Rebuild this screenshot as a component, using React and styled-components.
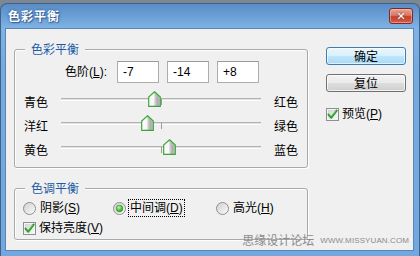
import React, { useId } from 'react';
import styled, { createGlobalStyle } from 'styled-components';

const Global = createGlobalStyle`
  html, body { margin: 0; padding: 0; background: #7c8792; }
  body {
    width: 420px; height: 256px; overflow: hidden;
    font-family: "Liberation Sans", "Noto Sans CJK SC", sans-serif;
    font-size: 12px; color: #000;
  }
`;

const Screen = styled.div`
  position: relative;
  width: 420px;
  height: 256px;
  box-sizing: border-box;
  padding-top: 3px;
  background: #7c8792;
`;

const Window = styled.div`
  height: 100%;
  box-sizing: border-box;
  display: flex;
  flex-direction: column;
  padding: 0 5px 5px 4px;
  border: 1px solid #3f6288;
  border-bottom: none;
  border-radius: 7px 7px 0 0;
  background: linear-gradient(to bottom, #5a8dc7 0px, #6a9fd6 12px, #80b3e5 24px, #76abe0 60px, #72a8df 100%);
`;

const TitleBar = styled.div`
  height: 24px;
  flex: none;
  display: flex;
  align-items: center;
  justify-content: space-between;
  padding: 0 1px 0 3px;
`;

const TitleText = styled.span`
  font-family: "Noto Sans CJK SC", sans-serif;
  font-weight: bold;
  font-size: 12px;
  letter-spacing: 1px;
  line-height: 14px;
  color: #fff;
  text-shadow: 0 0 3px rgba(40, 80, 140, 0.9), 1px 1px 1px rgba(30, 60, 110, 0.6);
`;

const CloseButton = styled.div`
  width: 24px;
  height: 16px;
  box-sizing: border-box;
  border: 1px solid #7c2a22;
  border-radius: 3px;
  background: linear-gradient(to bottom, #e6a597 0%, #d77865 45%, #c4402c 55%, #d0604a 100%);
  box-shadow: inset 0 0 0 1px rgba(255, 200, 190, 0.5);
  display: flex;
  align-items: center;
  justify-content: center;
  color: #fff;
  font-family: "DejaVu Sans", sans-serif;
  font-weight: bold;
  font-size: 11px;
  line-height: 1;
  text-shadow: 0 0 2px #7c2a22;
`;

const Client = styled.div`
  flex: 1;
  display: flex;
  background: #f0f0f0;
  border: 1px solid #5a86b4;
  padding: 0 0 0 8px;
`;

const LeftCol = styled.div`
  display: flex;
  flex-direction: column;
  gap: 20px;
  padding-top: 20px;
`;

const Group = styled.div`
  position: relative;
  width: 294px;
  height: ${p => p.$h}px;
  box-sizing: border-box;
  border: 1px solid #a9a9a9;
  border-radius: 3px;
  box-shadow: inset 1px 1px 0 #fff, 1px 1px 0 #fff;
  padding: ${p => p.$pad};
`;

const Legend = styled.span`
  position: absolute;
  left: 10px;
  top: -8px;
  padding: 0 6px;
  background: #f0f0f0;
  font-family: "Noto Sans CJK SC", sans-serif;
  font-size: 12px;
  line-height: 14px;
  color: #1f5ba6;
`;

const LevelsRow = styled.div`
  display: flex;
  align-items: center;
  gap: 8px;
`;

const LevelsLabel = styled.span`
  width: 92px;
  margin-right: 2px;
  text-align: right;
  line-height: 14px;
`;

const Mn = styled.u`
  text-decoration: underline;
  text-underline-offset: 1px;
`;

const NumBox = styled.div`
  width: 42px;
  height: 22px;
  box-sizing: border-box;
  border: 1px solid #abadb3;
  border-top-color: #9a9ca3;
  background: #fff;
  padding-left: 5px;
  display: flex;
  align-items: center;
  font-size: 12px;
`;

const Sliders = styled.div`
  margin-top: 7px;
  display: flex;
  flex-direction: column;
`;

const SliderRow = styled.div`
  height: 24px;
  display: flex;
  align-items: center;
  padding-left: 9px;
`;

const SideLabel = styled.span`
  width: ${p => p.$w}px;
  font-family: "Noto Sans CJK SC", sans-serif;
  font-size: 12px;
  line-height: 14px;
`;

const Track = styled.div`
  position: relative;
  width: 200px;
  height: 24px;
  margin-right: 13px;
`;

const Groove = styled.div`
  position: absolute;
  left: 0;
  right: 0;
  top: 8px;
  height: 1px;
  background: #e2e2e2;
  border-top: 1px solid #b2b2b2;
  border-bottom: 1px solid #fdfdfd;
`;

const Tick = styled.div`
  position: absolute;
  left: 100px;
  top: 9px;
  width: 1px;
  height: 6px;
  background: #9a9a9a;
`;

const ThumbWrap = styled.div`
  position: absolute;
  top: 1px;
  width: 13px;
  height: 16px;
  line-height: 0;
`;

const RightCol = styled.div`
  display: flex;
  flex-direction: column;
  margin-left: 18px;
  padding-top: 18px;
`;

const Button = styled.div`
  width: 80px;
  height: 18px;
  box-sizing: border-box;
  border-radius: 3px;
  border: 1px solid ${p => (p.$default ? '#3c7fb1' : '#707070')};
  background: ${p =>
    p.$default
      ? 'linear-gradient(to bottom, #eaf6fd 0%, #d9f0fc 48%, #bee6fd 52%, #a7d9f5 100%)'
      : 'linear-gradient(to bottom, #f2f2f2 0%, #ebebeb 48%, #dddddd 52%, #cfcfcf 100%)'};
  box-shadow: inset 0 0 0 1px ${p => (p.$default ? 'rgba(255,255,255,0.6)' : 'rgba(255,255,255,0.7)')};
  display: flex;
  align-items: center;
  justify-content: center;
  font-family: "Noto Sans CJK SC", sans-serif;
  font-size: 12px;
  line-height: 14px;
  margin-bottom: ${p => p.$mb || 0}px;
`;

const CheckRow = styled.label`
  display: flex;
  align-items: center;
  gap: 3px;
  height: 16px;
  margin-top: ${p => p.$mt || 0}px;
  line-height: 14px;
`;

const RadioRow = styled.div`
  display: grid;
  grid-template-columns: 90px 103px auto;
  align-items: center;
  height: 20px;
`;

const Option = styled.div`
  display: flex;
  align-items: center;
  gap: 2px;
  line-height: 14px;
`;

const OptText = styled.span`
  padding: 1px 1px;
  border: 1px dotted ${p => (p.$focus ? '#000' : 'transparent')};
`;

const Watermark = styled.div`
  position: absolute;
  right: 11px;
  bottom: 9px;
  display: flex;
  align-items: center;
  gap: 6px;
  color: #8c8c8c;
  pointer-events: none;
`;

const WmCn = styled.span`
  font-family: "Noto Sans CJK SC", sans-serif;
  font-size: 12px;
  line-height: 14px;
`;

const WmUrl = styled.span`
  font-family: "Liberation Sans", sans-serif;
  font-size: 8px;
  line-height: 10px;
  letter-spacing: 0.1px;
  padding-top: 2px;
`;

function Thumb({ value }) {
  const id = useId().replace(/:/g, '');
  return (
    <ThumbWrap style={{ left: 100 + value - 6 }}>
      <svg width="13" height="16" viewBox="0 0 13 16">
        <defs>
          <linearGradient id={`t${id}`} x1="0" y1="0" x2="1" y2="0">
            <stop offset="0" stopColor="#ffffff" />
            <stop offset="0.45" stopColor="#f6f6f6" />
            <stop offset="0.55" stopColor="#cdcdcd" />
            <stop offset="0.8" stopColor="#a9a9a9" />
            <stop offset="1" stopColor="#d8d8d8" />
          </linearGradient>
        </defs>
        <path d="M6.5 0.8 L12.3 6 L12.3 15.3 L0.7 15.3 L0.7 6 Z" fill={`url(#t${id})`} stroke="#3aa63a" strokeWidth="1.2" />
        <path d="M6.5 2.4 L10.8 6.4" stroke="#8fd88a" strokeWidth="1" fill="none" />
      </svg>
    </ThumbWrap>
  );
}

function CheckBox() {
  const id = useId().replace(/:/g, '');
  return (
    <svg width="13" height="13" viewBox="0 0 13 13" style={{ flex: 'none' }}>
      <defs>
        <linearGradient id={`c${id}`} x1="0" y1="0" x2="1" y2="1">
          <stop offset="0" stopColor="#d4d4d4" />
          <stop offset="1" stopColor="#f8f8f8" />
        </linearGradient>
      </defs>
      <rect x="0.5" y="0.5" width="12" height="12" fill="#f4f4f4" stroke="#8e8f8f" />
      <rect x="2" y="2" width="9" height="9" fill={`url(#c${id})`} />
      <path d="M2.6 6.6 L5.2 9.6 L10.6 2.6" stroke="#2b9b25" strokeWidth="2.2" fill="none" strokeLinecap="round" strokeLinejoin="round" />
      <path d="M3.4 6.4 L5.2 8.4 L9.8 2.9" stroke="#7fd46e" strokeWidth="0.8" fill="none" />
    </svg>
  );
}

function Radio({ checked }) {
  const id = useId().replace(/:/g, '');
  return (
    <svg width="13" height="13" viewBox="0 0 13 13" style={{ flex: 'none' }}>
      <defs>
        <linearGradient id={`r${id}`} x1="0" y1="0" x2="1" y2="1">
          <stop offset="0" stopColor="#d0d0d0" />
          <stop offset="1" stopColor="#fbfbfb" />
        </linearGradient>
        <radialGradient id={`d${id}`} cx="0.4" cy="0.35" r="0.7">
          <stop offset="0" stopColor="#c8f5b4" />
          <stop offset="0.5" stopColor="#5ec649" />
          <stop offset="1" stopColor="#2a8f22" />
        </radialGradient>
      </defs>
      <circle cx="6.5" cy="6.5" r="6" fill={`url(#r${id})`} stroke="#8e8f8f" />
      {checked && <circle cx="6.5" cy="6.5" r="3.4" fill={`url(#d${id})`} stroke="#3a9a32" strokeWidth="0.6" />}
    </svg>
  );
}

const sliders = [
  { left: '青色', right: '红色', value: -7 },
  { left: '洋红', right: '绿色', value: -14 },
  { left: '黄色', right: '蓝色', value: 8 },
];

export default function App() {
  return (
    <Screen>
      <Global />
      <Window>
        <TitleBar>
          <TitleText>色彩平衡</TitleText>
          <CloseButton>✕</CloseButton>
        </TitleBar>
        <Client>
          <LeftCol>
            <Group $h={119} $pad="11px 0 0 0">
              <Legend>色彩平衡</Legend>
              <LevelsRow>
                <LevelsLabel>色阶(<Mn>L</Mn>):</LevelsLabel>
                <NumBox>-7</NumBox>
                <NumBox>-14</NumBox>
                <NumBox>+8</NumBox>
              </LevelsRow>
              <Sliders>
                {sliders.map(s => (
                  <SliderRow key={s.left}>
                    <SideLabel $w={37}>{s.left}</SideLabel>
                    <Track>
                      <Groove />
                      <Tick />
                      <Thumb value={s.value} />
                    </Track>
                    <SideLabel $w={24}>{s.right}</SideLabel>
                  </SliderRow>
                ))}
              </Sliders>
            </Group>
            <Group $h={52} $pad="9px 0 0 8px">
              <Legend>色调平衡</Legend>
              <RadioRow>
                <Option>
                  <Radio />
                  <OptText>阴影(<Mn>S</Mn>)</OptText>
                </Option>
                <Option>
                  <Radio checked />
                  <OptText $focus>中间调(<Mn>D</Mn>)</OptText>
                </Option>
                <Option>
                  <Radio />
                  <OptText>高光(<Mn>H</Mn>)</OptText>
                </Option>
              </RadioRow>
              <CheckRow $mt={2}>
                <CheckBox />
                <span>保持亮度(<Mn>V</Mn>)</span>
              </CheckRow>
            </Group>
          </LeftCol>
          <RightCol>
            <Button $default $mb={9}>确定</Button>
            <Button>复位</Button>
            <CheckRow $mt={14}>
              <CheckBox />
              <span>预览(<Mn>P</Mn>)</span>
            </CheckRow>
          </RightCol>
        </Client>
      </Window>
      <Watermark>
        <WmCn>思缘设计论坛</WmCn>
        <WmUrl>WWW.MISSYUAN.COM</WmUrl>
      </Watermark>
    </Screen>
  );
}
